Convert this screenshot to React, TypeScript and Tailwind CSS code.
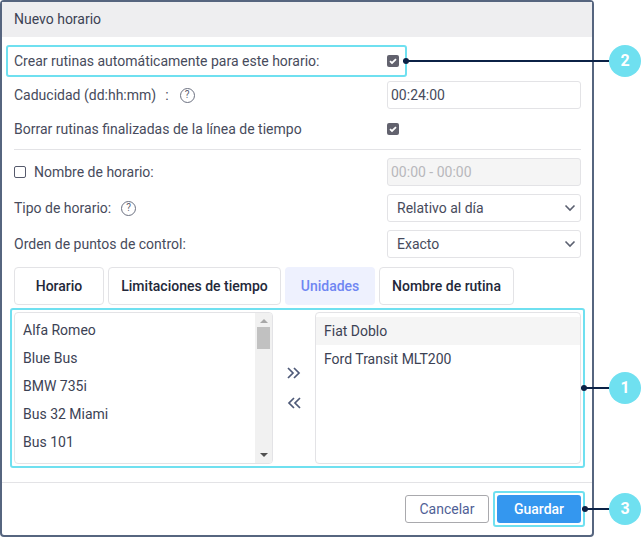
import React from "react";

const Check = () => (
  <span className="flex h-[12px] w-[12px] items-center justify-center rounded-[2px] bg-[#62626e]">
    <svg width="12" height="12" viewBox="0 0 12 12" fill="none">
      <path d="M3 6.2 L5 8 L9 4.2" stroke="#fff" strokeWidth="1.8" />
    </svg>
  </span>
);

const Help = () => (
  <span className="flex h-[15px] w-[15px] items-center justify-center rounded-full border border-[#6b7080] text-[10px] leading-none text-[#5b6070]">
    ?
  </span>
);

const Chevron = () => (
  <svg width="12" height="8" viewBox="0 0 12 8" fill="none" className="mr-[4px]">
    <path d="M1.5 1.5 L6 6 L10.5 1.5" stroke="#5b6070" strokeWidth="1.6" />
  </svg>
);

const Double = ({ flip }: { flip?: boolean }) => (
  <svg width="14" height="12" viewBox="0 0 14 12" fill="none" className={flip ? "rotate-180" : ""}>
    <path d="M1 1 L6 6 L1 11 M7 1 L12 6 L7 11" stroke="#4e5a78" strokeWidth="1.7" />
  </svg>
);

const Row = ({ children }: { children: React.ReactNode }) => (
  <div className="flex h-[28px] items-center justify-between">{children}</div>
);

const Field = ({ children, disabled }: { children: React.ReactNode; disabled?: boolean }) => (
  <div
    className={`flex h-[28px] w-[194px] items-center justify-between rounded-[3px] border border-[#e3e3e6] ${
      disabled ? "bg-[#f5f5f5] pl-[3px] text-[#b8b8bc]" : "bg-white"
    }`}
  >
    {children}
  </div>
);

const Tab = ({ children, active, w }: { children: React.ReactNode; active?: boolean; w: string }) => (
  <div
    className={`flex h-[38px] items-center justify-center rounded-[4px] font-medium ${w} ${
      active ? "bg-[#eef1fe] text-[#6f86f2]" : "border border-[#e3e3e6] text-[#23283a]"
    }`}
  >
    {children}
  </div>
);

const Badge = ({ n, top, from }: { n: number; top: string; from: string }) => (
  <div className={`absolute left-0 flex h-[32px] w-[641px] items-center ${top}`}>
    <div className={`relative h-[2px] bg-[#0b2146] ${from}`}>
      <span className="absolute left-0 top-[-2px] h-[6px] w-[6px] rounded-full bg-[#0b2146]" />
    </div>
    <div className="absolute left-[609px] flex h-[32px] w-[32px] items-center justify-center rounded-full bg-[#6fe0f0] text-[16px] font-bold text-white">
      {n}
    </div>
  </div>
);

const Highlight = ({ cls }: { cls: string }) => (
  <div className={`pointer-events-none absolute rounded-[3px] border-2 border-[#6fe0f0] ${cls}`} />
);

export default function App() {
  const left = ["Alfa Romeo", "Blue Bus", "BMW 735i", "Bus 32 Miami", "Bus 101"];
  return (
    <div className="relative h-[537px] w-[641px] overflow-hidden bg-white font-['Roboto',sans-serif] text-[14px] text-[#474b5c]">
      <div className="flex h-[537px] w-[594px] flex-col rounded-[4px] border-2 border-[#56657f]">
        <div className="flex h-[35px] shrink-0 items-center bg-[#eeeef0] pl-[12px] text-[#3c4254]">Nuevo horario</div>
        <div className="flex flex-col pl-[12px] pr-[11px] pt-[10px]">
          <div className="flex flex-col gap-[6px]">
            <Row>
              <span>Crear rutinas automáticamente para este horario:</span>
              <div className="w-[194px]"><Check /></div>
            </Row>
            <Row>
              <span className="flex items-center">
                Caducidad (dd:hh:mm)
                <span className="ml-[9px]">:</span>
                <span className="ml-[11px]"><Help /></span>
              </span>
              <Field><span className="pl-[3px]">00:24:00</span></Field>
            </Row>
            <Row>
              <span>Borrar rutinas finalizadas de la línea de tiempo</span>
              <div className="w-[194px]"><Check /></div>
            </Row>
          </div>
          <div className="mt-[6px] h-px bg-[#e3e3e6]" />
          <div className="mt-[8px] flex flex-col gap-[8px]">
            <Row>
              <span className="flex items-center gap-[8px]">
                <span className="h-[12px] w-[12px] rounded-[2px] border border-[#565a6c]" />
                Nombre de horario:
              </span>
              <Field disabled>00:00 - 00:00</Field>
            </Row>
            <Row>
              <span className="flex items-center gap-[10px]">Tipo de horario: <Help /></span>
              <Field><span className="pl-[9px]">Relativo al día</span><Chevron /></Field>
            </Row>
            <Row>
              <span>Orden de puntos de control:</span>
              <Field><span className="pl-[9px]">Exacto</span><Chevron /></Field>
            </Row>
          </div>
          <div className="mt-[9px] flex gap-[4px]">
            <Tab w="w-[90px]">Horario</Tab>
            <Tab w="w-[173px]">Limitaciones de tiempo</Tab>
            <Tab w="w-[90px]" active>Unidades</Tab>
            <Tab w="w-[135px]">Nombre de rutina</Tab>
          </div>
          <div className="mt-[7px] flex h-[152px] items-stretch">
            <div className="flex w-[259px] overflow-hidden rounded-[4px] border border-[#e3e3e6]">
              <div className="flex-1 pl-[8px] pt-[3px] text-[#3c4254]">
                {left.map((t) => (
                  <div key={t} className="flex h-[28px] items-center">{t}</div>
                ))}
              </div>
              <div className="flex w-[17px] flex-col items-center justify-between bg-[#f1f1f1] pb-[6px] pt-[6px]">
                <div className="flex flex-col items-center gap-[4px]">
                  <span className="h-0 w-0 border-x-[4px] border-b-[4px] border-x-transparent border-b-[#a8a8a8]" />
                  <span className="h-[22px] w-[13px] bg-[#c1c1c1]" />
                </div>
                <span className="h-0 w-0 border-x-[4px] border-t-[4px] border-x-transparent border-t-[#505050]" />
              </div>
            </div>
            <div className="flex w-[42px] flex-col items-center justify-center gap-[18px] pr-[1px]">
              <Double />
              <Double flip />
            </div>
            <div className="w-[266px] rounded-[4px] border border-[#e3e3e6] pt-[4px] text-[#3c4254]">
              <div className="flex h-[28px] items-center bg-[#f5f5f5] pl-[8px]">Fiat Doblo</div>
              <div className="flex h-[28px] items-center pl-[8px]">Ford Transit MLT200</div>
            </div>
          </div>
        </div>
        <div className="mt-[18px] flex flex-1 items-start justify-end gap-[8px] border-t border-[#e3e3e6] pr-[11px] pt-[12px]">
          <div className="flex h-[28px] w-[84px] items-center justify-center rounded-[3px] border border-[#a9a9ad] text-[#4f5f96]">Cancelar</div>
          <div className="flex h-[28px] w-[84px] items-center justify-center rounded-[3px] bg-[#3497ef] font-medium text-white">Guardar</div>
        </div>
      </div>
      <Highlight cls="left-[6px] top-[45px] h-[32px] w-[401px]" />
      <Highlight cls="left-[10px] top-[308px] h-[160px] w-[575px]" />
      <Highlight cls="left-[493px] top-[491px] h-[36px] w-[92px]" />
      <Badge n={2} top="top-[45px]" from="ml-[403px] w-[206px]" />
      <Badge n={1} top="top-[372px]" from="ml-[581px] w-[28px]" />
      <Badge n={3} top="top-[493px]" from="ml-[582px] w-[27px]" />
    </div>
  );
}
